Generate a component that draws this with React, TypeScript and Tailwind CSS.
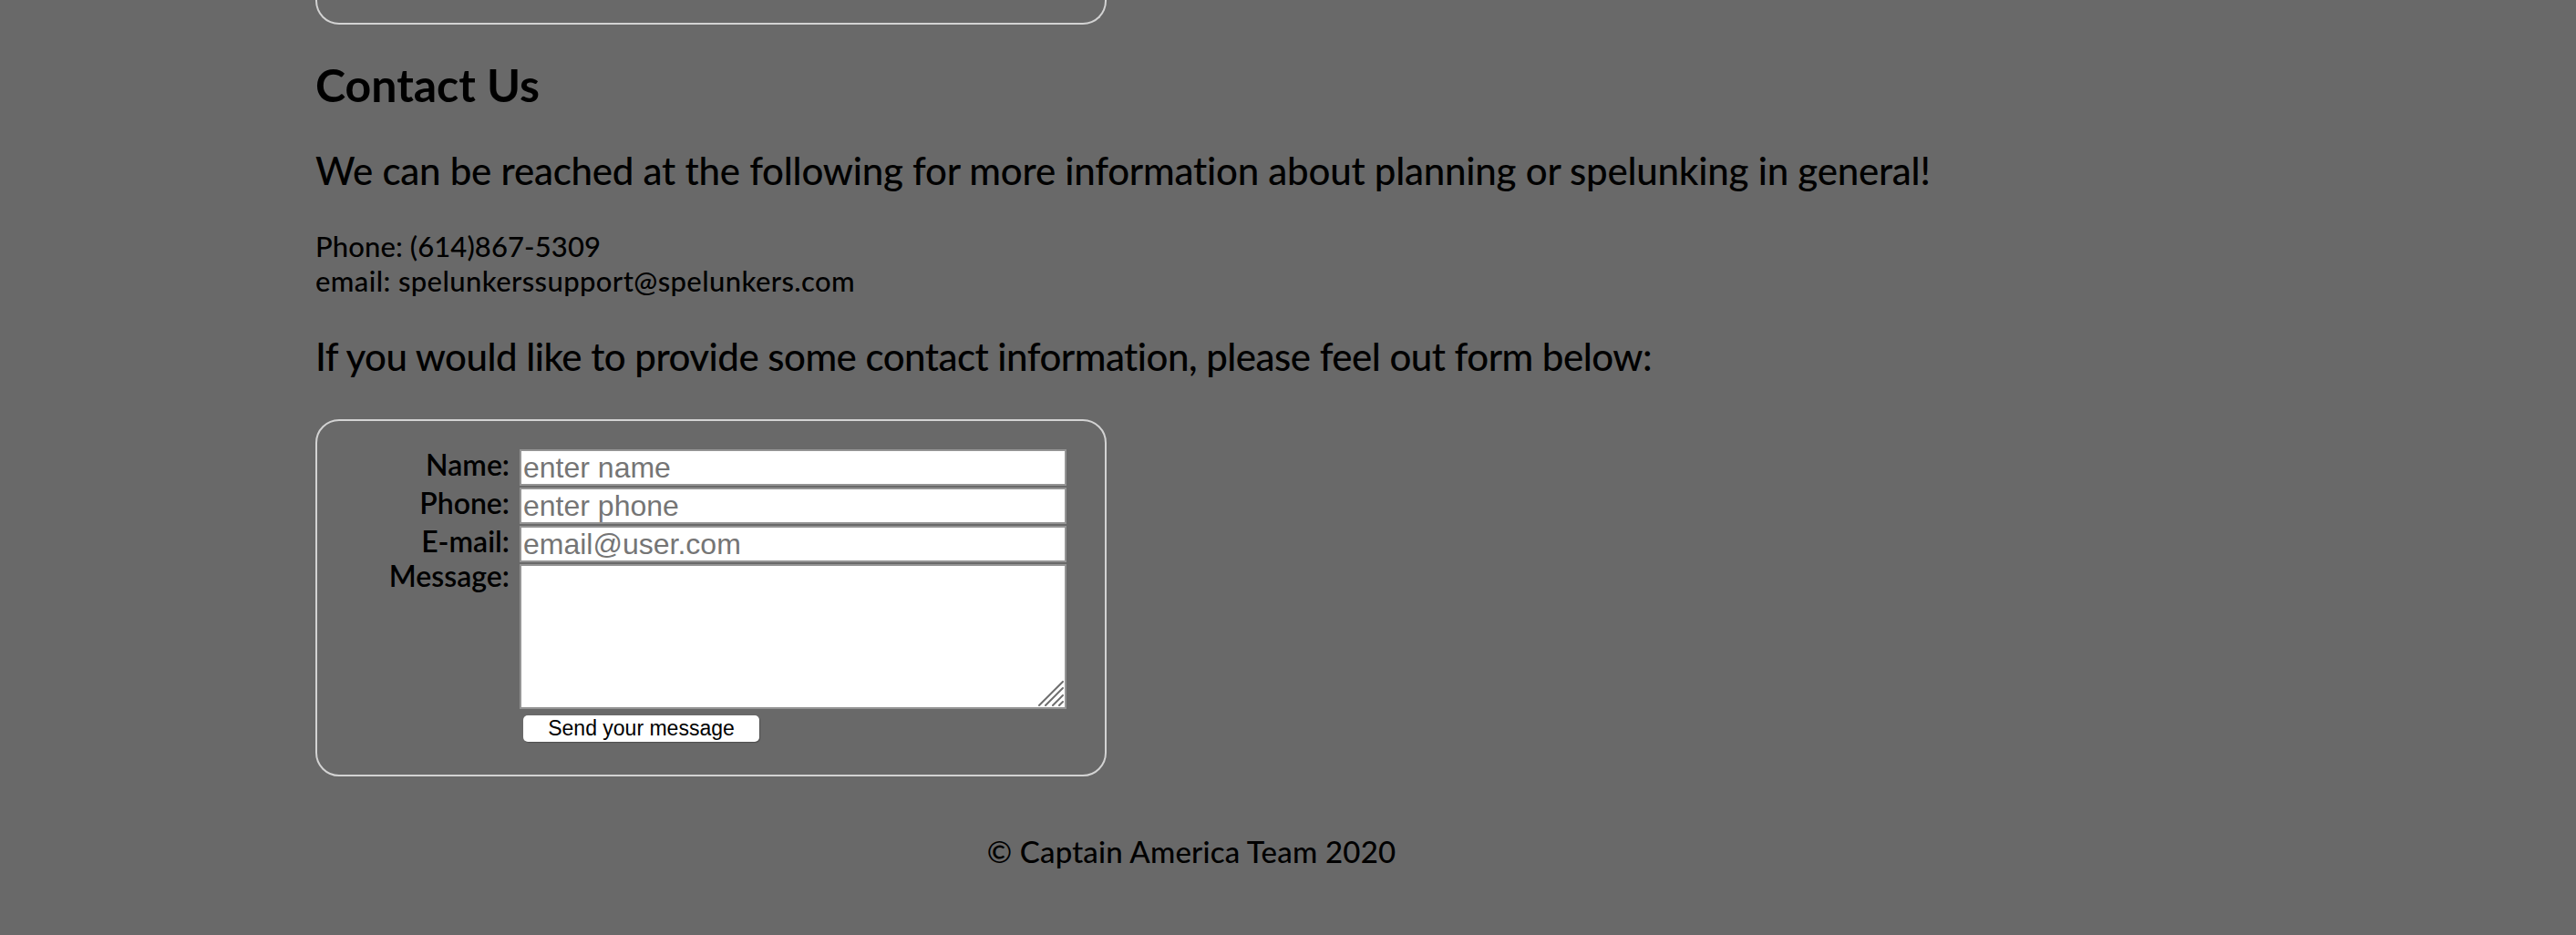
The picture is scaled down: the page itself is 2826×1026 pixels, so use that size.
import type { ReactNode } from "react";

function FieldLabel({ children, tall }: { children: ReactNode; tall?: boolean }) {
  return (
    <label
      className={
        tall
          ? "text-right text-[32px] leading-[25px] font-semibold"
          : "text-right text-[32px] leading-[34px] font-semibold"
      }
    >
      {children}
    </label>
  );
}

const inputClass =
  "h-[40px] w-[600px] border-2 border-[#949494] bg-white px-[2px] font-['Liberation_Sans',Arial,sans-serif] text-[32px] leading-[36px] text-black outline-none placeholder:text-[#757575]";

export default function App() {
  return (
    <div className="min-h-screen bg-[#696969] text-black">
      <div className="ml-[346px] w-[1922px] pb-[80px] font-['Lato',sans-serif]">
        <div className="h-[27px] w-[868px] rounded-b-[26px] border-x-2 border-b-2 border-[#d3d3d3]" />

        <h2 className="mt-[41px] text-[50px] leading-[50px] font-bold">Contact Us</h2>

        <p className="mt-[48px] text-[42px] leading-[42px] font-medium tracking-[-0.22px]">
          We can be reached at the following for more information about planning or spelunking in general!
        </p>

        <div className="mt-[43px] text-[31px] leading-[38px] font-medium tracking-[0.1px]">
          <p>Phone: (614)867-5309</p>
          <p className="tracking-[0.4px]">email: spelunkerssupport@spelunkers.com</p>
        </div>

        <p className="mt-[43px] text-[42px] leading-[42px] font-medium tracking-[-0.5px]">
          If you would like to provide some contact information, please feel out form below:
        </p>

        <form
          className="mt-[48px] h-[392px] w-[868px] rounded-[26px] border-2 border-[#d3d3d3] pt-[31px]"
          onSubmit={(e) => e.preventDefault()}
        >
          <div className="grid grid-cols-[211px_600px] gap-x-[11px] gap-y-[2px]">
            <FieldLabel>Name:</FieldLabel>
            <input className={inputClass} placeholder="enter name" />
            <FieldLabel>Phone:</FieldLabel>
            <input className={inputClass} placeholder="enter phone" />
            <FieldLabel>E-mail:</FieldLabel>
            <input className={inputClass} placeholder="email@user.com" />
            <FieldLabel tall>Message:</FieldLabel>
            <div className="relative h-[159px] w-[600px]">
              <textarea className="h-full w-full resize-none border-2 border-[#949494] bg-white outline-none" />
              <svg
                className="pointer-events-none absolute right-[3px] bottom-[3px]"
                width="28"
                height="28"
                viewBox="0 0 28 28"
                fill="none"
                stroke="#6e6e6e"
                strokeWidth="2"
                strokeLinecap="round"
              >
                <line x1="1" y1="27" x2="27" y2="1" />
                <line x1="8" y1="27" x2="27" y2="8" />
                <line x1="16" y1="27" x2="27" y2="16" />
                <line x1="23" y1="27" x2="27" y2="23" />
              </svg>
            </div>
            <div />
            <div>
              <button
                type="submit"
                className="ml-[4px] mt-[5px] h-[29px] w-[259px] rounded-[5px] bg-white font-['Liberation_Sans',Arial,sans-serif] text-[23px] leading-[29px] text-black shadow-[1px_1px_1px_rgba(0,0,0,0.25)]"
              >
                Send your message
              </button>
            </div>
          </div>
        </form>

        <p className="mt-[66px] text-center text-[33px] leading-[33px] font-medium tracking-[0.2px]">
          © Captain America Team 2020
        </p>
      </div>
    </div>
  );
}
